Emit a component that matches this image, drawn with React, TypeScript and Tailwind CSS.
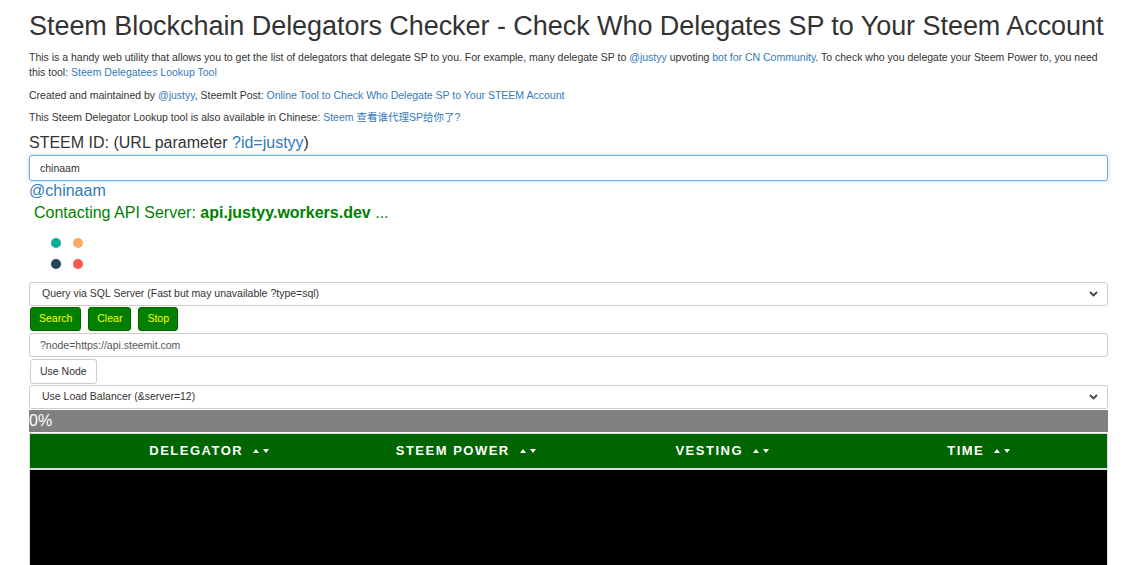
import { useState } from "react";

const columns = ["DELEGATOR", "STEEM POWER", "VESTING", "TIME"];

function SortArrows() {
  return (
    <span className="ml-[10px] inline-flex items-center gap-[4px]">
      <svg width="6" height="4" viewBox="0 0 6 4">
        <path d="M3 0 L6 4 L0 4 Z" fill="#fff" />
      </svg>
      <svg width="6" height="4" viewBox="0 0 6 4">
        <path d="M0 0 L6 0 L3 4 Z" fill="#fff" />
      </svg>
    </span>
  );
}

function Chevron() {
  return (
    <svg
      className="pointer-events-none absolute right-[10px] top-1/2 -translate-y-1/2"
      width="9"
      height="6"
      viewBox="0 0 9 6"
    >
      <path d="M1 1 L4.5 4.5 L8 1" stroke="#444" strokeWidth="1.8" fill="none" />
    </svg>
  );
}

function Select({ value }: { value: string }) {
  return (
    <div className="relative">
      <select
        defaultValue={value}
        className="block h-[24px] w-full appearance-none rounded-[3px] border border-[#ccc] bg-white pl-[12px] text-[10.5px] text-[#333] outline-none"
      >
        <option>{value}</option>
      </select>
      <Chevron />
    </div>
  );
}

function GreenButton({ label }: { label: string }) {
  return (
    <button className="h-[24px] rounded-[3px] border border-[#006600] bg-[#008000] px-[8px] text-[10.5px] text-[#ffff00]">
      {label}
    </button>
  );
}

export default function App() {
  const [id, setId] = useState("chinaam");
  const [node, setNode] = useState("");

  return (
    <div className="min-h-[565px] bg-white font-['Liberation_Sans',Arial,sans-serif] text-[#333]">
      <div className="ml-[29px] mr-[33px] pt-[6px]">
        <h1 className="whitespace-nowrap text-[27px] leading-[40px] tracking-[-0.05px] text-[#333]">
          Steem Blockchain Delegators Checker - Check Who Delegates SP to Your Steem Account
        </h1>

        <p className="mt-[4px] text-[10.5px] leading-[15px]">
          This is a handy web utility that allows you to get the list of delegators that delegate SP to you. For
          example, many delegate SP to <a className="text-[#337ab7]">@justyy</a> upvoting{" "}
          <a className="text-[#337ab7]">bot for CN Community</a>. To check who you delegate your Steem Power to, you
          need this tool: <a className="text-[#337ab7]">Steem Delegatees Lookup Tool</a>
        </p>
        <p className="mt-[8px] text-[10.5px] leading-[15px]">
          Created and maintained by <a className="text-[#337ab7]">@justyy</a>, SteemIt Post:{" "}
          <a className="text-[#337ab7]">Online Tool to Check Who Delegate SP to Your STEEM Account</a>
        </p>
        <p className="mt-[7px] text-[10.5px] leading-[15px]">
          This Steem Delegator Lookup tool is also available in Chinese:{" "}
          <a className="font-['Liberation_Sans','Noto_Sans_CJK_SC',sans-serif] leading-[15px] text-[#337ab7]">
            Steem 查看谁代理SP给你了?
          </a>
        </p>

        <div className="mt-[8px] text-[16px] leading-[20px]">
          STEEM ID: (URL parameter <a className="text-[#337ab7]">?id=justyy</a>)
        </div>
        <input
          value={id}
          onChange={(e) => setId(e.target.value)}
          className="mt-[2px] block h-[26px] w-full rounded-[3px] border border-[#66afe9] bg-white px-[10px] text-[10.5px] text-[#333] shadow-[0_0_4px_rgba(102,175,233,0.5)] outline-none"
        />
        <div className="text-[16px] leading-[20px] text-[#337ab7]">@{id}</div>
        <div className="mt-[2px] pl-[5px] text-[16px] leading-[20px] text-[#008000]">
          Contacting API Server: <b>api.justyy.workers.dev</b> ...
        </div>

        {/* loader dots */}
        <div className="ml-[22px] mt-[15px] grid w-[32px] grid-cols-2 gap-[11px]">
          <span className="h-[10px] w-[10px] rounded-full bg-[#0fae96]" />
          <span className="h-[10px] w-[10px] rounded-full bg-[#fdaa63]" />
          <span className="h-[10px] w-[10px] rounded-full bg-[#1e4656]" />
          <span className="h-[10px] w-[10px] rounded-full bg-[#f95753]" />
        </div>

        <div className="mt-[13px]">
          <Select value="Query via SQL Server (Fast but may unavailable ?type=sql)" />
        </div>
        <div className="mt-[1px] flex gap-[7px] pl-[1px]">
          <GreenButton label="Search" />
          <GreenButton label="Clear" />
          <GreenButton label="Stop" />
        </div>
        <input
          value={node}
          onChange={(e) => setNode(e.target.value)}
          placeholder="?node=https://api.steemit.com"
          className="mt-[2px] block h-[24px] w-full rounded-[3px] border border-[#ccc] bg-white px-[10px] text-[10.5px] text-[#333] outline-none placeholder:text-[#555]"
        />
        <button className="mt-[2px] ml-[1px] block h-[25px] rounded-[3px] border border-[#ccc] bg-white px-[9px] text-[10.5px] text-[#333]">
          Use Node
        </button>
        <div className="mt-[1px]">
          <Select value="Use Load Balancer (&server=12)" />
        </div>

        {/* progress */}
        <div className="mt-[1px] h-[22px] w-full bg-[#808080] text-[16px] leading-[22px] text-white">0%</div>

        {/* results table */}
        <div className="mt-[1px] border border-[#ddd]">
          <div className="grid h-[36px] grid-cols-[51px_1fr_1fr_1fr_1fr] items-center border-b-2 border-[#ddd] bg-[#006400]">
            <div />
            {columns.map((c) => (
              <div
                key={c}
                className="flex items-center justify-center text-[13px] font-bold tracking-[1.5px] text-white"
              >
                {c}
                <SortArrows />
              </div>
            ))}
          </div>
          <div className="h-[120px] bg-black" />
        </div>
      </div>
    </div>
  );
}
